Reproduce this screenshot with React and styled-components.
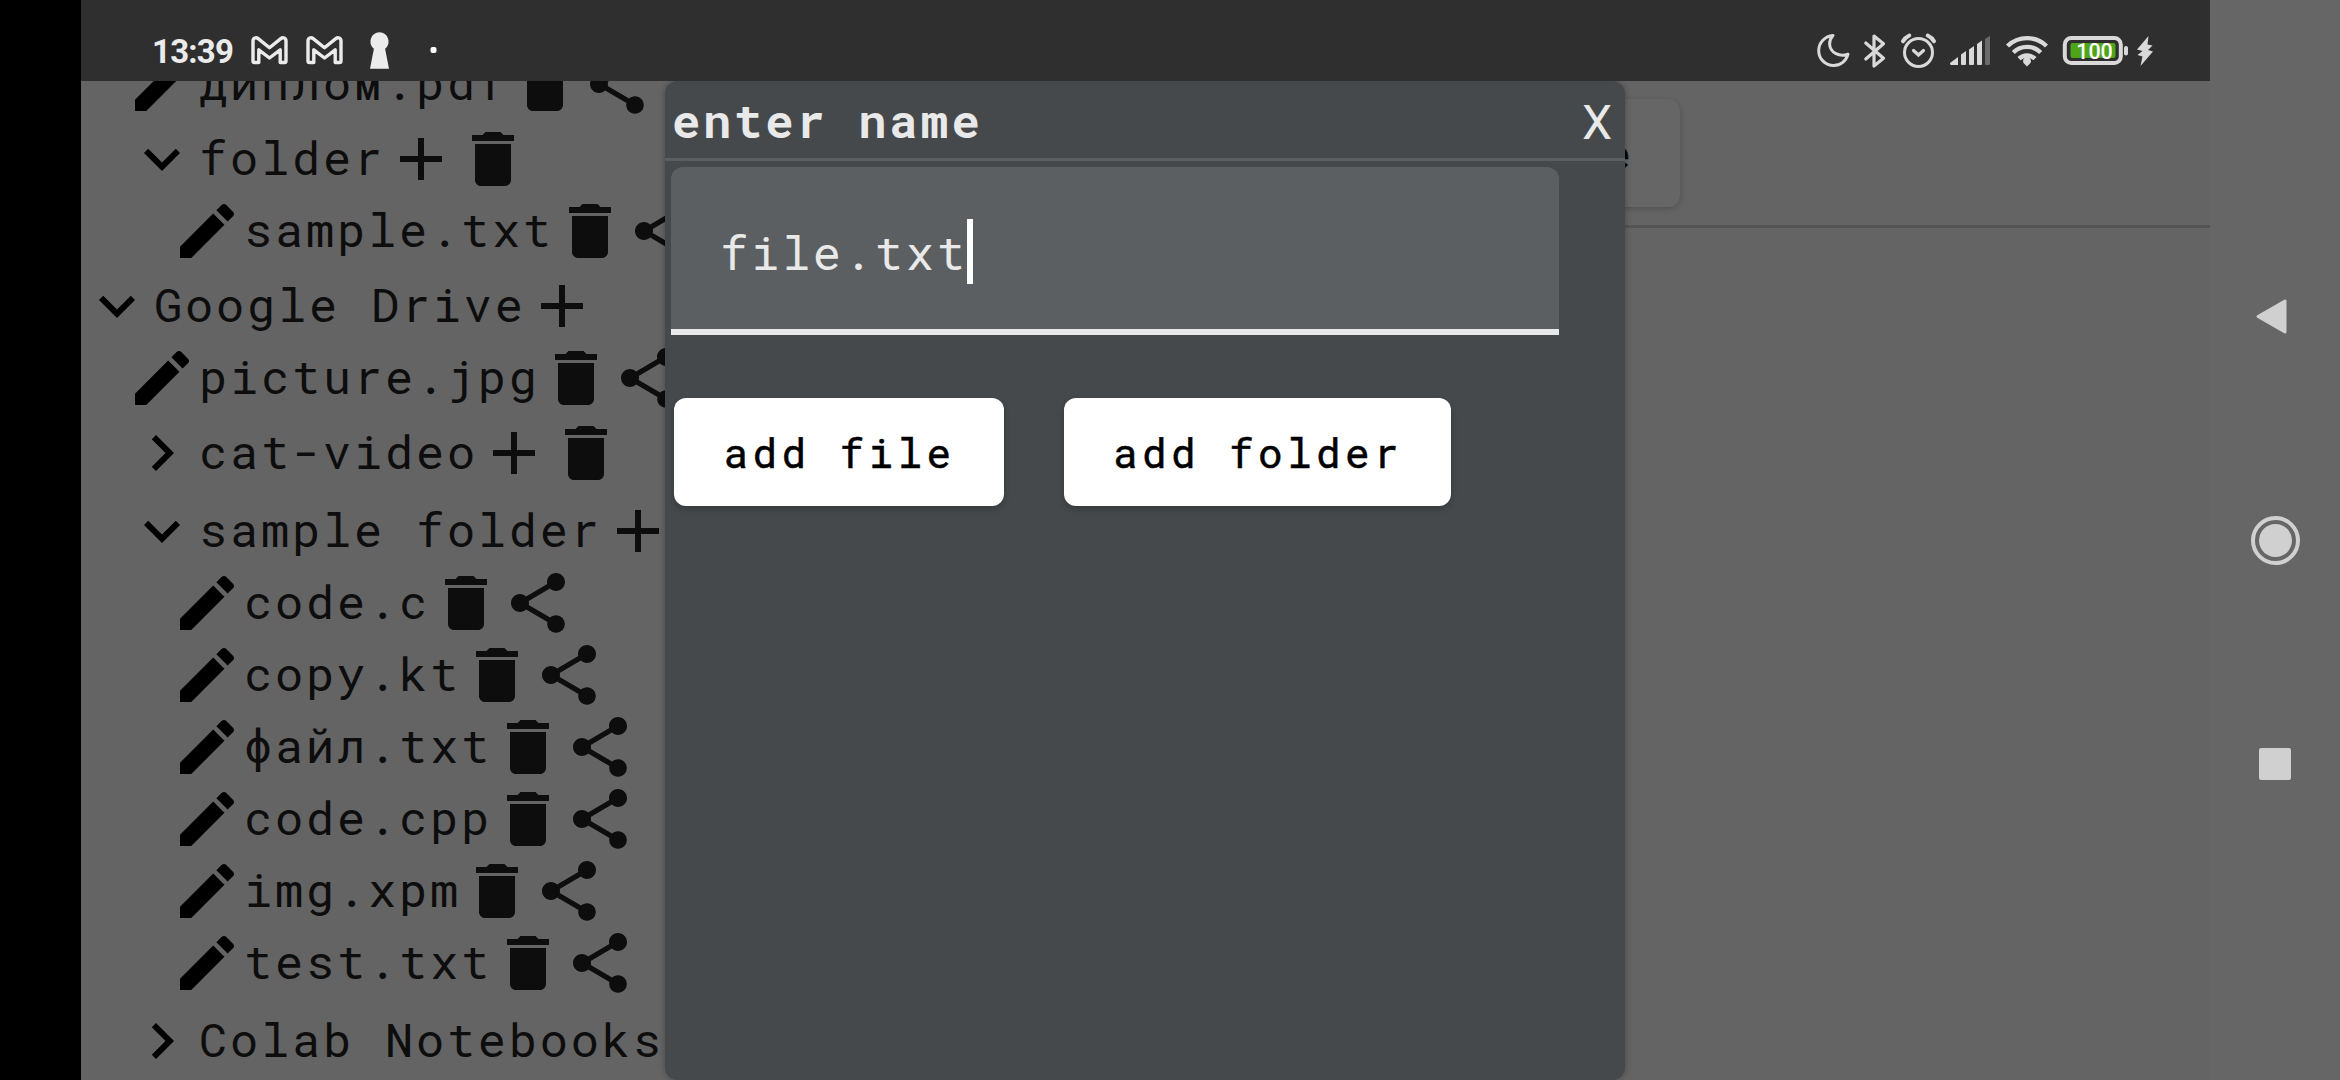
import React from 'react';
import styled, { createGlobalStyle, css } from 'styled-components';

const mono = '"Roboto Mono", "DejaVu Sans Mono", "Liberation Mono", monospace';

const GlobalStyle = createGlobalStyle`
  * { box-sizing: border-box; }
  body { margin: 0; background: #000; overflow: hidden; }
`;

const Device = styled.div`
  display: grid;
  grid-template-columns: 81px 2129px 130px;
  width: 2340px;
  height: 1080px;
  overflow: hidden;
  background: #000;
`;

const Cutout = styled.div`
  background: #000;
`;

const Screen = styled.div`
  display: flex;
  flex-direction: column;
  min-height: 0;
  background: #646464;
`;

const StatusBar = styled.header`
  display: flex;
  flex: none;
  justify-content: space-between;
  height: 81px;
  padding: 32px 57px 0 71px;
  background: #2f2f2f;
`;

const StatusGroup = styled.div`
  display: flex;
  align-items: center;
  height: 38px;
`;

const Clock = styled.span`
  width: 99px;
  padding-top: 1px;
  font: 700 33px/38px Roboto, sans-serif;
  letter-spacing: -0.8px;
  color: #ebebeb;
`;

const Glyph = styled.svg`
  display: block;
  flex: none;
  width: ${(p) => p.$w}px;
  height: 38px;
  margin-left: ${(p) => p.$gap || 0}px;
  overflow: visible;
`;

const Body = styled.main`
  position: relative;
  display: flex;
  height: 999px;
  overflow: hidden;
`;

const Tree = styled.nav`
  display: flex;
  flex-direction: column;
  flex: none;
  width: 584px;
  margin-top: -33px;
`;

const Row = styled.div`
  display: flex;
  flex: none;
  align-items: center;
  padding-top: ${(p) => p.$top}px;
  padding-left: ${(p) => p.$level * 45}px;
`;

const RowName = styled.span`
  flex: none;
  height: 72px;
  padding-left: 1px;
  font: 400 47px/68px ${mono};
  letter-spacing: 2.78px;
  white-space: pre;
  color: #0d0d0d;
`;

const Icon = styled.svg`
  display: block;
  flex: none;
  width: 72px;
  height: 72px;
  fill: ${(p) => (p.$dark ? '#000' : '#0d0d0d')};
`;

const Editor = styled.section`
  display: flex;
  flex-direction: column;
  flex: 1;
`;

const Toolbar = styled.div`
  display: flex;
  align-items: flex-start;
  height: 147px;
  padding: 18px 0 0 600px;
  border-bottom: 3px solid #545454;
`;

const Button = styled.button`
  flex: none;
  height: 108px;
  padding: 1px 48px 0 49.5px;
  border: 0;
  border-radius: 12px;
  font: 400 41px/107px ${mono};
  letter-spacing: 4.4px;
  white-space: pre;
  color: #000;
  -webkit-text-stroke: 0.5px #000;
  background: #fff;
  box-shadow: 0 3px 6px rgba(0, 0, 0, 0.22);
  ${(p) =>
    p.$dimmed &&
    css`
      width: 415px;
      padding-right: 45px;
      text-align: right;
      background: #666;
      box-shadow: 0 2px 6px rgba(0, 0, 0, 0.2);
    `}
`;

const Dialog = styled.div`
  position: absolute;
  top: 0;
  left: 584px;
  display: flex;
  flex-direction: column;
  width: 960px;
  height: 999px;
  border-radius: 13px;
  background: #45494b;
  box-shadow: 0 0 6px rgba(0, 0, 0, 0.3);
`;

const DialogHeader = styled.div`
  display: flex;
  flex: none;
  justify-content: space-between;
  height: 80px;
  padding: 0 13px 0 7px;
  border-bottom: 3px solid #5b5f61;
  color: #e9e9e9;
`;

const Title = styled.h1`
  margin: 0;
  font: 700 47px/78px ${mono};
  letter-spacing: 2.85px;
`;

const Close = styled.span`
  padding-top: 3px;
  font: 400 48px/77px Roboto, sans-serif;
`;

const Field = styled.div`
  display: flex;
  flex: none;
  align-items: flex-start;
  width: 888px;
  height: 168px;
  margin: 6px 0 0 6px;
  padding: 52px 47px 0 49px;
  border-bottom: 6px solid #e9e9e9;
  border-radius: 12px 12px 0 0;
  background: #5b5f61;
  background-clip: padding-box;
`;

const FieldText = styled.span`
  width: 247px;
  font: 400 47px/66px ${mono};
  letter-spacing: 2.75px;
  white-space: pre;
  color: #e9e9e9;
`;

const Caret = styled.span`
  width: 6px;
  height: 65px;
  background: #fff;
`;

const Actions = styled.div`
  display: flex;
  gap: 60px;
  margin: 63px 0 0 9px;
`;

const NavBar = styled.aside`
  display: flex;
  flex-direction: column;
  align-items: center;
  justify-content: space-between;
  padding: 291px 0 291px;
  background: #666;
`;

const NavIcon = styled.svg`
  display: block;
  width: 50px;
  height: 50px;
  overflow: visible;
  fill: #d0d0d0;
`;

const paths = {
  edit: 'M3 17.25V21h3.75L17.81 9.94l-3.75-3.75L3 17.25zM20.71 7.04c.39-.39.39-1.02 0-1.41l-2.34-2.34c-.39-.39-1.02-.39-1.41 0l-1.83 1.83 3.75 3.75 1.83-1.83z',
  trash: 'M6 19c0 1.1.9 2 2 2h8c1.1 0 2-.9 2-2V7H6v12zM19 4h-3.5l-1-1h-5l-1 1H5v2h14V4z',
  plus: 'M19 13h-6v6h-2v-6H5v-2h6V5h2v6h6v2z',
  down: 'M7.41 8.59 12 13.17l4.59-4.58L18 10l-6 6-6-6 1.41-1.41z',
  right: 'M8.59 16.59 13.17 12 8.59 7.41 10 6l6 6-6 6-1.41-1.41z',
  share: 'M18 16.08c-.76 0-1.44.3-1.96.77L8.91 12.7c.05-.23.09-.46.09-.7s-.04-.47-.09-.7l7.05-4.11c.54.5 1.25.81 2.04.81 1.66 0 3-1.34 3-3s-1.34-3-3-3-3 1.34-3 3c0 .24.04.47.09.7L8.04 9.81C7.5 9.31 6.79 9 6 9c-1.66 0-3 1.34-3 3s1.34 3 3 3c.79 0 1.5-.31 2.04-.81l7.12 4.16c-.05.21-.08.43-.08.65 0 1.61 1.31 2.92 2.92 2.92s2.92-1.31 2.92-2.92-1.31-2.92-2.92-2.92z',
};

const RowIcon = ({ name, dark }) => (
  <Icon viewBox="0 0 24 24" $dark={dark}>
    <path d={paths[name]} />
  </Icon>
);

const entries = [
  { name: 'диплом.pdf', level: 1, lead: 'edit' },
  { name: 'folder', level: 1, lead: 'down', top: 3 },
  { name: 'sample.txt', level: 2, lead: 'edit' },
  { name: 'Google Drive', level: 0, lead: 'down', top: 3, root: true },
  { name: 'picture.jpg', level: 1, lead: 'edit' },
  { name: 'cat-video', level: 1, lead: 'right', top: 3 },
  { name: 'sample folder', level: 1, lead: 'down', top: 6 },
  { name: 'code.c', level: 2, lead: 'edit' },
  { name: 'copy.kt', level: 2, lead: 'edit' },
  { name: 'файл.txt', level: 2, lead: 'edit' },
  { name: 'code.cpp', level: 2, lead: 'edit' },
  { name: 'img.xpm', level: 2, lead: 'edit' },
  { name: 'test.txt', level: 2, lead: 'edit' },
  { name: 'Colab Notebooks', level: 1, lead: 'right', top: 6 },
];

const TreeRow = ({ name, level, lead, top = 0, root }) => {
  const isFile = lead === 'edit';
  return (
    <Row $level={level} $top={top}>
      <RowIcon name={lead} dark />
      <RowName>{name}</RowName>
      {!isFile && <RowIcon name="plus" />}
      {!root && <RowIcon name="trash" />}
      {isFile && <RowIcon name="share" />}
    </Row>
  );
};

const Mail = ({ gap }) => (
  <Glyph $w={37} $gap={gap} viewBox="0 0 37 38" fill="none" stroke="#ebebeb" strokeWidth="3.4" strokeLinejoin="round">
    <path d="M2 9c0-3 3-4.200 5.200-2.400L18.500 15.800 29.800 6.600C32 4.800 35 6 35 9v20c0 1-.5 1.500-1.500 1.500h-4.300V17.800L18.500 26 7.800 17.800v12.700H3.500C2.500 30.500 2 30 2 29z" />
  </Glyph>
);

const ink = '#d9d9d9';

const Status = () => (
  <StatusBar>
    <StatusGroup>
      <Clock>13:39</Clock>
      <Mail />
      <Mail gap={18} />
      <Glyph $w={19} $gap={27} viewBox="0 0 19 38" fill="#ebebeb">
        <path d="M9.500.3a9.300 9.300 0 0 1 5.600 16.500L19 36.800H0L3.900 16.800A9.300 9.300 0 0 1 9.500.3z" />
      </Glyph>
      <Glyph $w={7} $gap={41} viewBox="0 0 7 38" fill="#fff">
        <rect x="0.500" y="15" width="6" height="6" rx="2" />
      </Glyph>
    </StatusGroup>
    <StatusGroup>
      <Glyph $w={33} viewBox="0 0 33 38" fill="none" stroke={ink} strokeWidth="3" strokeLinejoin="round">
        <path d="M16 3.400C8 4 1.700 10.500 1.700 18.500c0 8.500 6.600 15 15 15 7 0 12.500-4.700 14.300-11.400C23 25.500 13 21 12.600 12c-.1-3.500 1.300-6.300 3.400-8.600z" />
      </Glyph>
      <Glyph $w={22} $gap={14} viewBox="0 0 22 38" fill="none" stroke={ink} strokeWidth="3.200" strokeLinejoin="round" strokeLinecap="round">
        <path d="M1.800 11 19.500 26.300 10 34V4L19.500 11.700 1.800 27" />
      </Glyph>
      <Glyph $w={35} $gap={15} viewBox="0 0 35 38" fill="none" stroke={ink} strokeWidth="3" strokeLinecap="round">
        <circle cx="17.500" cy="20.500" r="14" />
        <path d="M12.500 18.500l5 4.500 5-4.500" strokeWidth="3.200" />
        <path d="M2 9.300C3.500 6.600 5.500 4.800 8.300 3.500M33 9.300c-1.500-2.700-3.500-4.500-6.300-5.800" strokeWidth="4" />
      </Glyph>
      <Glyph $w={41} $gap={14} viewBox="0 0 41 38" fill={ink}>
        <path d="M0 31 8 25V33H1.500C.5 33 0 32.500 0 31zM11 22.500l5-3.500V32q0 1-1 1h-3q-1 0-1-1zM19 17.500l5-3.500V32q0 1-1 1h-3q-1 0-1-1zM27 12l5-3.500V32q0 1-1 1h-3q-1 0-1-1z" />
        <path d="M35 7 40 3.800V32q0 1-1 1h-3q-1 0-1-1z" fill="#6a6a6a" />
      </Glyph>
      <Glyph $w={42} $gap={15} viewBox="0 0 42 38" fill="none" stroke={ink} strokeWidth="4.400">
        <path d="M1.500 14a28 28 0 0 1 39 0M7.300 20.500a19.500 19.500 0 0 1 27.400 0M13 26.700a11.500 11.500 0 0 1 16 0" />
        <path d="M21 34.500 17.500 31a4 4 0 1 1 7 0z" fill={ink} stroke="none" />
      </Glyph>
      <Glyph $w={65} $gap={15} viewBox="0 0 65 38">
        <rect x="1.800" y="6" width="56" height="25" rx="6.500" fill="none" stroke={ink} strokeWidth="4" />
        <rect x="7.500" y="11" width="45" height="15" rx="2" fill="#4fa51a" />
        <rect x="61" y="14" width="4" height="9.500" rx="2" fill={ink} />
        <text x="31.500" y="26.500" textAnchor="middle" fontFamily="Roboto, sans-serif" fontWeight="500" fontSize="21.500" fill="#fff">100</text>
      </Glyph>
      <Glyph $w={17} $gap={8} viewBox="0 0 17 38" fill={ink}>
        <path d="M12.500 4 1 17.500 6.500 19 1.500 23 6.500 24.500 4.500 34 17 19.500 12 18 16.500 13.500 11.500 12.500z" />
      </Glyph>
    </StatusGroup>
  </StatusBar>
);

export default function App() {
  return (
    <>
      <GlobalStyle />
      <Device>
        <Cutout />
        <Screen>
          <Status />
          <Body>
            <Tree>
              {entries.map((e) => (
                <TreeRow key={e.name} {...e} />
              ))}
            </Tree>
            <Editor>
              <Toolbar>
                <Button $dimmed>save file</Button>
              </Toolbar>
            </Editor>
            <Dialog>
              <DialogHeader>
                <Title>enter name</Title>
                <Close>X</Close>
              </DialogHeader>
              <Field>
                <FieldText>file.txt</FieldText>
                <Caret />
              </Field>
              <Actions>
                <Button>add file</Button>
                <Button>add folder</Button>
              </Actions>
            </Dialog>
          </Body>
        </Screen>
        <NavBar>
          <NavIcon viewBox="0 0 50 50">
            <path d="M8 25.500 35 10V41z" stroke="#d0d0d0" strokeWidth="3" strokeLinejoin="round" />
          </NavIcon>
          <NavIcon viewBox="0 0 50 50">
            <circle cx="25.500" cy="25.500" r="22.500" fill="none" stroke="#d0d0d0" strokeWidth="4" />
            <circle cx="25.500" cy="25.500" r="16.500" />
          </NavIcon>
          <NavIcon viewBox="0 0 50 50">
            <rect x="9" y="9" width="32" height="32" rx="2" />
          </NavIcon>
        </NavBar>
      </Device>
    </>
  );
}
